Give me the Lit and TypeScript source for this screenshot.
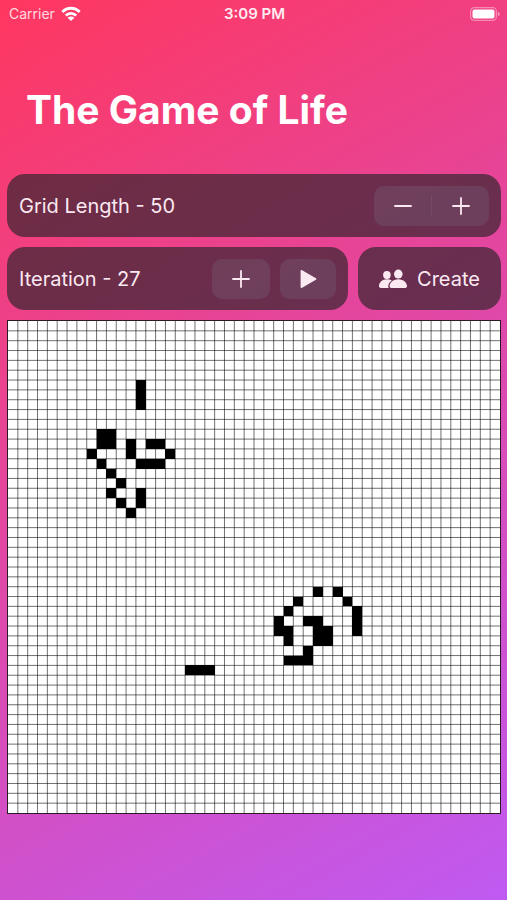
import { LitElement, html, svg, css } from "lit";
import { customElement, state } from "lit/decorators.js";

type Cells = Record<number, number[]>;

/** Live cells of the current generation, listed as row -> columns. */
const LIVE: Cells = {
  6: [13],
  7: [13],
  8: [13],
  11: [9, 10],
  12: [9, 10, 12, 14, 15],
  13: [8, 12, 16],
  14: [9, 13, 14, 15],
  15: [10],
  16: [11],
  17: [10, 13],
  18: [11, 13],
  19: [12],
  27: [31, 33],
  28: [29, 34],
  29: [28, 35],
  30: [27, 30, 31, 35],
  31: [27, 28, 31, 32, 35],
  32: [28, 31, 32],
  33: [30],
  34: [28, 29, 30],
  35: [18, 19, 20],
};

const plusIcon = html`<svg class="icon" viewBox="0 0 20 20" width="20" height="20" aria-hidden="true">
  <path d="M10 2v16M2 10h16" stroke="currentColor" stroke-width="1.8" stroke-linecap="round" />
</svg>`;

const minusIcon = html`<svg class="icon" viewBox="0 0 20 20" width="20" height="20" aria-hidden="true">
  <path d="M2 10h16" stroke="currentColor" stroke-width="1.8" stroke-linecap="round" />
</svg>`;

const playIcon = html`<svg class="icon" viewBox="0 0 20 20" width="20" height="20" aria-hidden="true">
  <path d="M2.6 1.9v16.2c0 .8.8 1.1 1.5.7l13.8-8c.7-.4.7-1.2 0-1.6l-13.8-8c-.7-.4-1.5-.1-1.500.7z" fill="currentColor" />
</svg>`;

const peopleIcon = html`<svg class="icon" viewBox="0 0 28 20" width="28" height="20" aria-hidden="true">
  <g fill="currentColor">
    <ellipse cx="7.900" cy="6" rx="3.800" ry="4" />
    <path d="M12.900 11.400c-1.400-.8-3.100-1.200-5-1.200C3.100 10.200 0 13.600 0 17c0 1.300.7 2 1.800 2h7.900c-1.100-2.500.2-5.700 3.200-7.600z" />
    <ellipse cx="19.300" cy="5.100" rx="4.300" ry="4.500" />
    <path d="M19.300 10.200c-5.300 0-8.700 3.700-8.700 6.900 0 1.200.7 1.900 1.800 1.900h13.800c1.100 0 1.800-.7 1.800-1.900 0-3.200-3.400-6.900-8.700-6.900z" />
  </g>
</svg>`;

@customElement("status-bar")
export class StatusBar extends LitElement {
  static styles = css`
    :host {
      display: grid;
      grid-template-columns: 1fr auto 1fr;
      align-items: center;
      height: 27px;
      padding: 0 7px 0 9px;
      font-size: 14px;
      color: #fff;
    }
    .carrier {
      display: flex;
      align-items: center;
      gap: 6px;
    }
    .name {
      opacity: 0.8;
    }
    .time {
      font-size: 15px;
      font-weight: 600;
      opacity: 0.9;
    }
    .battery {
      justify-self: end;
      display: block;
    }
  `;

  render() {
    return html`
      <div class="carrier">
        <span class="name">Carrier</span>
        <svg viewBox="0 0 20 16" width="20" height="16" role="img" aria-label="Wi-Fi">
          <g fill="none" stroke="#fff" stroke-width="2.800">
            <path d="M1.400 6C6.200 1 13.800 1 18.600 6" />
            <path d="M4.800 9.600c3-2.900 7.400-2.900 10.400 0" />
          </g>
          <path d="M10 15l-3.400-3.300c2-1.600 4.800-1.600 6.800 0z" fill="#fff" />
        </svg>
      </div>
      <div class="time">3:09 PM</div>
      <svg class="battery" viewBox="0 0 30 14" width="30" height="14" role="img" aria-label="Battery full">
        <rect x=".6" y=".6" width="25.800" height="12.800" rx="3.800" fill="none" stroke="#fff" stroke-opacity=".4" stroke-width="1.200" />
        <rect x="2.500" y="2.500" width="22" height="9" rx="2" fill="#fff" />
        <path d="M27.800 4.800c1.500.5 2 1.300 2 2.200s-.5 1.700-2 2.200z" fill="#fff" fill-opacity=".45" />
      </svg>
    `;
  }
}

@customElement("life-board")
export class LifeBoard extends LitElement {
  static properties = { size: { type: Number } };
  declare size: number;

  static styles = css`
    :host {
      display: block;
    }
    .board {
      display: block;
      width: 100%;
      background: #fff;
      border: 1px solid #2b1a26;
      box-sizing: border-box;
    }
    .line {
      stroke: #000;
      stroke-opacity: 0.56;
      stroke-width: 1px;
      vector-effect: non-scaling-stroke;
    }
  `;

  constructor() {
    super();
    this.size = 50;
  }

  render() {
    const n = this.size;
    const steps = Array.from({ length: n - 1 }, (_, i) => i + 1);
    const lines = steps.map((i) => `M${i} 0V${n}M0 ${i}H${n}`).join("");
    return html`
      <svg class="board" viewBox="0 0 ${n} ${n}" role="img" aria-label="Game of Life board">
        <path class="line" d=${lines} fill="none" />
        ${Object.entries(LIVE).map(([row, cols]) =>
          cols.map((col) => svg`<rect x=${col} y=${row} width="1" height="1" shape-rendering="crispEdges" />`),
        )}
      </svg>
    `;
  }
}

@customElement("app-root")
export class AppRoot extends LitElement {
  @state() gridLength = 50;
  @state() iteration = 27;

  static styles = css`
    :host {
      display: block;
      min-height: 100vh;
      box-sizing: border-box;
      background: linear-gradient(151deg, #ff375f, #bf5af2);
      font-family: Inter, "Liberation Sans", sans-serif;
      color: #fff;
    }
    .title {
      margin: 0;
      padding: 58px 26px 40px;
      font-size: 39px;
      line-height: 49px;
      font-weight: 700;
    }
    .content {
      display: grid;
      gap: 10px;
      padding: 0 6px 24px 7px;
    }
    .row {
      display: flex;
      gap: 10px;
    }
    .card {
      display: flex;
      align-items: center;
      flex: 1;
      gap: 10px;
      box-sizing: border-box;
      height: 63px;
      padding: 0 12px;
      border: 0;
      border-radius: 18px;
      background: rgba(58, 38, 49, 0.72);
      color: #fbe9f2;
      font: inherit;
      font-size: 20px;
    }
    .label {
      flex: 1;
      white-space: nowrap;
    }
    .create {
      flex: 0 0 143px;
      justify-content: center;
    }
    .key {
      display: grid;
      place-items: center;
      width: 58px;
      height: 40px;
      padding: 0;
      border: 0;
      border-radius: 10px;
      background: rgba(126, 128, 146, 0.22);
      color: inherit;
    }
    .play {
      width: 56px;
    }
    .stepper {
      display: flex;
      align-items: center;
      border-radius: 10px;
      background: rgba(126, 128, 146, 0.22);
    }
    .stepper .key {
      width: 57px;
      background: none;
    }
    .divider {
      width: 1px;
      height: 22px;
      background: rgba(160, 140, 165, 0.14);
    }
    .icon {
      display: block;
    }
  `;

  render() {
    return html`
      <status-bar></status-bar>
      <h1 class="title">The Game of Life</h1>
      <main class="content">
        <div class="card">
          <span class="label">Grid Length - ${this.gridLength}</span>
          <div class="stepper" role="group" aria-label="Grid length">
            <button class="key" aria-label="Decrease" @click=${() => (this.gridLength = Math.max(36, this.gridLength - 1))}>${minusIcon}</button>
            <span class="divider"></span>
            <button class="key" aria-label="Increase" @click=${() => this.gridLength++}>${plusIcon}</button>
          </div>
        </div>
        <div class="row">
          <div class="card">
            <span class="label">Iteration - ${this.iteration}</span>
            <button class="key" aria-label="Next iteration" @click=${() => this.iteration++}>${plusIcon}</button>
            <button class="key play" aria-label="Play">${playIcon}</button>
          </div>
          <button class="card create">${peopleIcon}<span>Create</span></button>
        </div>
        <life-board .size=${this.gridLength}></life-board>
      </main>
    `;
  }
}
